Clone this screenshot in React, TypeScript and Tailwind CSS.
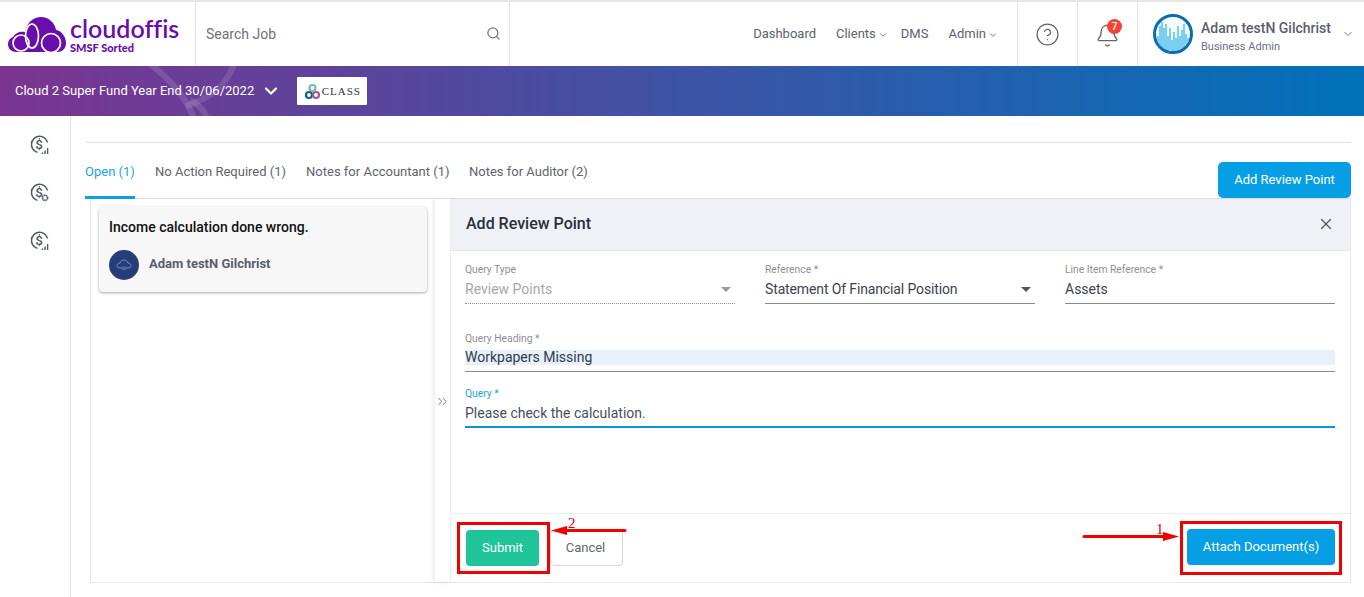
import { Bell, ChevronDown, ChevronsRight, CircleHelp, Search, X } from "lucide-react";

function Logo() {
  return (
    <div className="flex items-center w-[195px] pl-[8px] shrink-0">
      <svg width="58" height="36" viewBox="0 0 58 36" className="shrink-0 mt-[1px]">
        <path d="M8 35 C-1 35 -3 23 5 20 C8 15 13 14 17 15 C19 5 26 0 33 0 C41 0 47 6 48 13 C54 14 58 20 58 26 C58 32 54 35 49 35 Z" fill="#6a0dad" />
        <g fill="none" stroke="#fff" strokeWidth="1.7">
          <circle cx="13" cy="26" r="8" />
          <ellipse cx="24" cy="19" rx="6.5" ry="12" />
          <circle cx="43" cy="26" r="9.5" />
        </g>
      </svg>
      <div className="ml-[4px] flex flex-col">
        <span className="font-['Lato',sans-serif] text-[25px] leading-[24px] font-semibold [font-variant-ligatures:none] text-[#6a0dad]">cloudoffis</span>
        <span className="mt-[2px] font-['Lato',sans-serif] text-[11px] leading-[11px] font-black text-[#6a0dad]">SMSF Sorted</span>
      </div>
    </div>
  );
}

function DollarIcon({ gear }: { gear?: boolean }) {
  return (
    <svg width="20" height="20" viewBox="0 0 20 20" fill="none" stroke="#535968" strokeWidth="1.5">
      <path d="M17.6 7.5 A8.2 8.2 0 1 0 7.5 17.4" />
      <text x="9" y="14" fontSize="13.5" fontWeight="500" textAnchor="middle" fill="#535968" stroke="none" fontFamily="Roboto">$</text>
      {gear ? (
        <circle cx="15" cy="14.8" r="2.6" strokeWidth="1.7" strokeDasharray="1.6 0.5" />
      ) : (
        <path d="M12.5 19v-1.5M15 19v-3.5M17.6 19v-6" strokeWidth="1.4" />
      )}
    </svg>
  );
}

function Field({ label, value, kind, valueClass }: { label: string; value: string; kind?: "disabled" | "select"; valueClass?: string }) {
  const off = kind === "disabled";
  return (
    <div>
      <div className="text-[10.3px] leading-[12px] text-[#8f8f8f]">{label}</div>
      <div className={`flex items-center h-[26px] mt-[2px] pb-[2px] border-b text-[14px] ${off ? "border-dotted border-[#8a8a8a] text-[#a8a8a8]" : "border-[#8c8c8c] text-[#3c4250]"}`}>
        <span className={`flex-1 ${valueClass ?? ""}`}>{value}</span>
        {kind && <span className={`w-0 h-0 border-x-[5px] border-x-transparent border-t-[5px] mr-[4px] ${off ? "border-t-[#9a9a9a]" : "border-t-[#555]"}`} />}
      </div>
    </div>
  );
}

function NavItem({ label, caret }: { label: string; caret?: boolean }) {
  return (
    <span className="flex items-center text-[13px] text-[#5c6070]">
      {label}
      {caret && <ChevronDown size={10} className="ml-[2px] mt-[2px]" />}
    </span>
  );
}

export default function App() {
  return (
    <div className="relative w-[1364px] h-[597px] overflow-hidden bg-white font-['Roboto',sans-serif]">
      {/* Header */}
      <header className="flex h-[66px] border-t-2 border-[#e6e6e6]">
        <Logo />
        <div className="flex items-center w-[315px] pl-[10px] pr-[8px] border-x border-[#e4e4e4]">
          <span className="flex-1 text-[14px] text-[#6d7080]">Search Job</span>
          <Search size={15} className="mb-[2px] text-[#777]" />
        </div>
        <nav className="flex flex-1 items-center justify-end pr-[19px]">
          <NavItem label="Dashboard" />
          <span className="ml-[20px]"><NavItem label="Clients" caret /></span>
          <span className="ml-[13px]"><NavItem label="DMS" /></span>
          <span className="ml-[20px]"><NavItem label="Admin" caret /></span>
        </nav>
        <div className="flex items-center justify-center w-[60px] border-l border-[#e4e4e4]">
          <CircleHelp size={25} strokeWidth={1.2} className="text-[#666]" />
        </div>
        <div className="relative flex items-center justify-center w-[60px] border-l border-[#e4e4e4]">
          <Bell size={25} strokeWidth={1.2} className="mt-[3px] text-[#666]" />
          <span className="absolute left-[29px] top-[17px] flex items-center justify-center w-[15px] h-[15px] rounded-full bg-[#f44336] text-[10px] font-medium text-white">7</span>
        </div>
        <div className="flex items-center w-[227px] pl-[15px] border-l border-[#e4e4e4]">
          <svg width="40" height="40" viewBox="0 0 40 40" className="shrink-0">
            <circle cx="20" cy="20" r="18.5" fill="#f4fbff" stroke="#0b6cb4" strokeWidth="3" />
            <path d="M5 22V28M7 12V32M9 8V33M11 14V35M13 10V36M15 22V36M17 14V36M19 26V37M21 18V37M23 24V37M25 12V36M27 22V35M29 16V34M31 10V33M33 20V30M35 24V28" stroke="#3cb5ea" strokeWidth="1.3" />
          </svg>
          <div className="ml-[8px] flex-1 pt-[4px]">
            <div className="text-[14px] leading-[17px] font-medium text-[#5a5e6c]">Adam testN Gilchrist</div>
            <div className="mt-[3px] text-[11px] leading-[13px] text-[#6d7080]">Business Admin</div>
          </div>
          <ChevronDown size={12} className="mr-[10px] text-[#777]" />
        </div>
      </header>

      {/* Job banner */}
      <div className="relative flex items-center h-[50px] pl-[15px] overflow-hidden bg-linear-to-r/srgb from-[#7b3591] to-[#0071b9]">
        <svg className="absolute left-0 top-0" width="400" height="50" viewBox="0 0 400 50" fill="none" stroke="#ffffff" strokeOpacity="0.12" strokeWidth="6">
          <path d="M150 -2 Q182 22 194 52" />
          <path d="M234 -2 Q224 28 186 40" />
          <path d="M190 34 Q202 40 207 52" />
        </svg>
        <span className="relative text-[13px] text-white">Cloud 2 Super Fund Year End 30/06/2022</span>
        <ChevronDown size={20} strokeWidth={2.6} className="relative ml-[7px] text-white" />
        <div className="relative flex items-center justify-center ml-[16px] w-[70px] h-[28px] bg-white rounded-[1px]">
          <svg width="18" height="17" viewBox="0 0 18 17" fill="none" strokeWidth="2.2">
            <circle cx="5" cy="12" r="3" stroke="#136577" />
            <circle cx="12" cy="12" r="3" stroke="#a1578f" />
            <circle cx="8.5" cy="5" r="3" stroke="#74bda9" />
          </svg>
          <span className="font-['Liberation_Serif',serif] text-[11px] tracking-[1px] text-[#333]">CLASS</span>
        </div>
      </div>

      <div className="flex h-[481px]">
        {/* Side rail */}
        <aside className="flex flex-col items-center gap-[28px] w-[71px] pt-[19px] pl-[10px] border-r border-[#e4e4e4] shrink-0">
          <DollarIcon />
          <DollarIcon gear />
          <DollarIcon />
        </aside>

        <main className="flex-1 flex flex-col pl-[14px] pr-[13px] pt-[26px] min-w-0">
          {/* Tabs */}
          <div className="flex items-end h-[57px] border-y border-[#e4e4e4] border-b-[#dcdcdc]">
            <div className="flex flex-1 self-stretch pt-[21px] text-[13px] leading-[16px] text-[#5f6270]">
              <span className="h-[35px] w-[50px] border-b-[3px] border-[#0a9fe6] text-[#1aa3e8]">Open (1)</span>
              <span className="ml-[20px]">No Action Required (1)</span>
              <span className="ml-[20px]">Notes for Accountant (1)</span>
              <span className="ml-[19.5px]">Notes for Auditor (2)</span>
            </div>
            <button className="w-[133px] h-[36px] rounded-[5px] bg-[#069fe6] text-[13px] text-white">Add Review Point</button>
          </div>

          <div className="flex flex-1 ml-[5px] mb-[14px] border-l border-b border-r border-[#e8e8e8]">
            {/* Review point list */}
            <div className="w-[344px] shrink-0 pt-[8px] pl-[8px] pr-[8px]">
              <div className="h-[85px] rounded-[4px] bg-[#f7f7f8] pl-[10px] pt-[11px] shadow-[0_1px_3px_rgba(0,0,0,0.35)]">
                <div className="text-[14px] leading-[18px] font-medium text-[#111]">Income calculation done wrong.</div>
                <div className="flex items-center mt-[14px]">
                  <span className="flex items-center justify-center w-[30px] h-[30px] rounded-full bg-[#263d7a]">
                    <svg width="16" height="12" viewBox="0 0 16 12" fill="none" stroke="#9fb0d6" strokeWidth="0.7">
                      <path d="M4 9 C0 9 0 4 4 4 C5 0 11 0 12 4 C16 4 16 9 12 9 H10 M6 9 H4" />
                      <path d="M7 7.5V11M9 7.5V11" />
                    </svg>
                  </span>
                  <span className="ml-[10px] mb-[2px] text-[13px] font-bold text-[#5a5e6c]">Adam testN Gilchrist</span>
                </div>
              </div>
            </div>

            {/* Collapse strip */}
            <div className="flex items-center justify-center w-[15px] shrink-0 shadow-[-2px_1px_3px_rgba(0,0,0,0.08)] text-[#555]">
              <ChevronsRight size={17} strokeWidth={1.3} className="mt-[22px]" />
            </div>

            {/* Add review point form */}
            <section className="flex flex-1 flex-col min-w-0 border-l border-[#eeeeee]">
              <div className="flex items-center justify-between h-[52px] pl-[15px] pr-[15px] bg-[#f0f1f6] border-b border-[#e4e4e4]">
                <h2 className="text-[16px] font-medium mb-[2px] text-[#2a2f3a]">Add Review Point</h2>
                <X size={18} strokeWidth={1.6} className="mb-[2px] text-[#555]" />
              </div>
              <div className="flex-1 pl-[14px] pr-[15px] pt-[13px]">
                <div className="grid grid-cols-3 gap-x-[30px]">
                  <Field label="Query Type" value="Review Points" kind="disabled" />
                  <Field label="Reference *" value="Statement Of Financial Position" kind="select" valueClass="tracking-[-0.13px]" />
                  <Field label="Line Item Reference *" value="Assets" />
                </div>
                <div className="mt-[29px]">
                  <div className="text-[10.3px] leading-[12px] text-[#8f8f8f]">Query Heading *</div>
                  <div className="pt-[5px] pb-[6px] border-b border-[#8c8c8c]">
                    <div className="h-[15px] leading-[15px] bg-[#e8f0fb] text-[14px] text-[#333a48]">Workpapers Missing</div>
                  </div>
                </div>
                <div className="mt-[16px]">
                  <div className="text-[10.3px] leading-[12px] text-[#1aa3e8]">Query *</div>
                  <div className="h-[28px] pt-[4px] text-[14px] leading-[18px] border-b-2 border-[#0a93d8] text-[#4a4e5a]">Please check the calculation.</div>
                </div>
              </div>
              <div className="flex items-start h-[69px] pt-[15px] pl-[15px] pr-[15px] border-t border-[#eeeeee]">
                <button className="w-[73px] h-[36px] mt-[1px] rounded-[4px] bg-[#1fc598] text-[13px] text-white">Submit</button>
                <button className="w-[73px] h-[36px] mt-[1px] ml-[11px] pr-[2px] rounded-[4px] border border-[#d5d7e0] text-[13px] text-[#5f6675]">Cancel</button>
                <button className="ml-auto w-[148px] h-[36px] rounded-[4px] bg-[#069fe6] text-[13px] text-white">Attach Document(s)</button>
              </div>
            </section>
          </div>
        </main>
      </div>

      {/* Red annotations pasted over the screenshot */}
      <div className="absolute left-[457px] top-[522px] w-[93px] h-[52px] border-[3px] border-[#f00000]" />
      <div className="absolute left-[1180px] top-[521px] w-[162px] h-[54px] border-[3px] border-[#f00000]" />
      <svg className="absolute left-0 top-[510px]" width="1364" height="40" viewBox="0 0 1364 40">
        <path d="M625 20.5H565" stroke="#f00000" strokeWidth="3" strokeLinecap="round" />
        <path d="M551 20.5L567 16V25Z" fill="#f00000" />
        <path d="M1084 26.5H1165" stroke="#f00000" strokeWidth="3" strokeLinecap="round" />
        <path d="M1179 26.5L1163 22V31Z" fill="#f00000" />
      </svg>
      <span className="absolute left-[568px] top-[515px] font-['Liberation_Serif',serif] text-[15px] leading-[16px] text-[#e00000]">2</span>
      <span className="absolute left-[1156px] top-[521px] font-['Liberation_Serif',serif] text-[15px] leading-[16px] text-[#e00000]">1</span>
    </div>
  );
}
